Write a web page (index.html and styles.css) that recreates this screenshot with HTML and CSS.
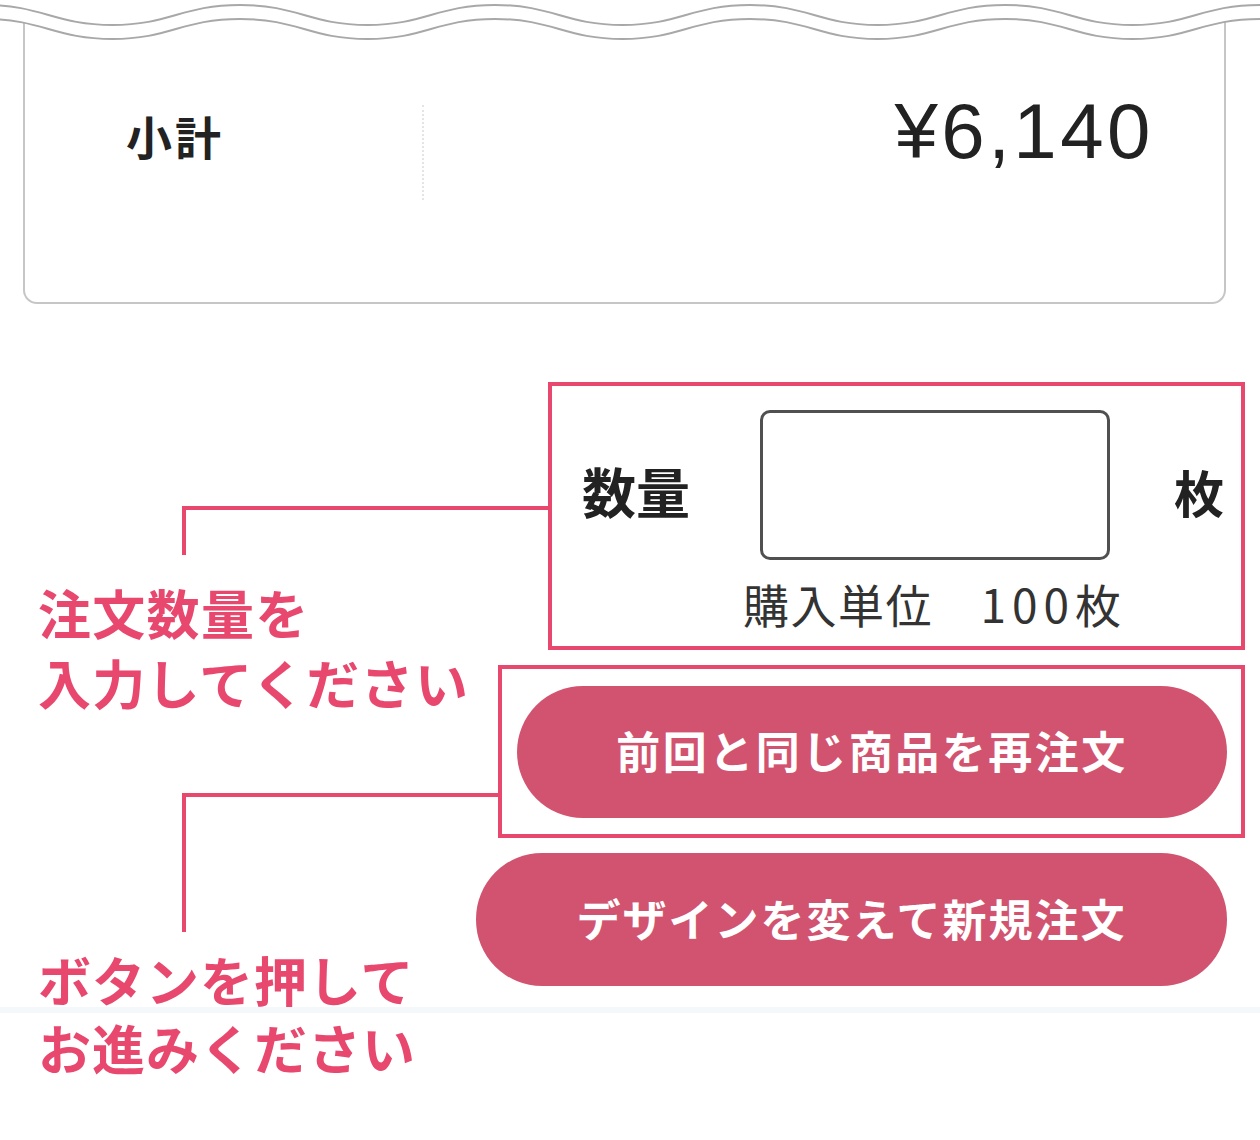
FILE: index.html
```html
<!DOCTYPE html>
<html lang="ja">

<head>
    <meta charset="utf-8">
    <title>ご注文</title>
    <link rel="stylesheet" href="styles.css">
</head>

<body>
    <!-- torn paper edge over the top of the summary card -->
    <svg class="torn-edge" width="1260" height="50" viewBox="0 0 1260 50">
        <path class="torn-fill" d="M-15,19 C42,19 55,39 112.5,39 S182,19 240,19 S310,39 367.5,39 S437,19 495,19 S565,39 622.5,39 S692,19 750,19 S820,39 877.5,39 S947,19 1005,19 S1075,39 1132.5,39 S1202,19 1260,19 S1330,39 1387.5,39 L1387.5,-10 L-15,-10 Z" />
        <path class="torn-line" d="M-15,5 C42,5 55,25 112.5,25 S182,5 240,5 S310,25 367.5,25 S437,5 495,5 S565,25 622.5,25 S692,5 750,5 S820,25 877.5,25 S947,5 1005,5 S1075,25 1132.5,25 S1202,5 1260,5 S1330,25 1387.5,25" />
        <path class="torn-line" d="M-15,19 C42,19 55,39 112.5,39 S182,19 240,19 S310,39 367.5,39 S437,19 495,19 S565,39 622.5,39 S692,19 750,19 S820,39 877.5,39 S947,19 1005,19 S1075,39 1132.5,39 S1202,19 1260,19 S1330,39 1387.5,39" />
    </svg>

    <div class="summary">
        <div class="summary-row">
            <div class="summary-label">小計</div>
            <div class="summary-price"><span>¥6,140</span></div>
        </div>
    </div>

    <div class="order">
        <div class="notes">
            <div class="note note-qty">
                <div class="leader leader-qty"></div>
                <p class="note-text">注文数量を<br>入力してください</p>
            </div>
            <div class="note note-btn">
                <div class="leader leader-btn"></div>
                <p class="note-text">ボタンを押して<br>お進みください</p>
            </div>
        </div>

        <div class="steps">
            <div class="qty-box">
                <label class="qty-label" for="qty">数量</label>
                <input class="qty-input" id="qty" type="text">
                <span class="qty-unit">枚</span>
                <p class="qty-note">購入単位　<span class="qty-num">100</span>枚</p>
            </div>
            <div class="btn-box">
                <button class="order-btn">前回と同じ商品を再注文</button>
            </div>
            <button class="order-btn order-btn-new">デザインを変えて新規注文</button>
        </div>
    </div>
</body>

</html>
```

FILE: styles.css
```css
*,
html {
    margin: 0;
    padding: 0;
    box-sizing: border-box;
}

body {
    width: 1260px;
    position: relative;
    font-family: "Noto Sans CJK JP", "Noto Sans", sans-serif;
    color: #222;
    background: #fff linear-gradient(#f4f8fb, #f4f8fb) no-repeat 0 1007px / 100% 6px;
}

/* torn edge */
.torn-edge {
    position: absolute;
    top: 0;
    left: 0;
    z-index: 1;
}

.torn-fill {
    fill: #fff;
}

.torn-line {
    fill: none;
    stroke: #a8a8a8;
    stroke-width: 2;
}

/* subtotal card */
.summary {
    height: 304px;
    margin: 0 34px 0 23px;
    padding-top: 105px;
    border: 2px solid #c6c6c6;
    border-top: 0;
    border-radius: 0 0 14px 14px;
}

.summary-row {
    display: flex;
    height: 95px;
}

.summary-label {
    width: 397px;
    padding: 7px 0 0 101px;
    font-size: 46px;
    line-height: 46px;
    font-weight: 700;
    letter-spacing: 3px;
}

.summary-price {
    flex: 1;
    padding-right: 70px;
    border-left: 2px dotted #e4e4e4;
    text-align: right;
}

.summary-price span {
    display: block;
    margin-top: -13px;
    font-family: "Liberation Sans", Arial, sans-serif;
    font-size: 78px;
    line-height: 78px;
    letter-spacing: 3.5px;
}

/* order area */
.order {
    display: flex;
    padding-top: 78px;
}

.notes {
    width: 498px;
    flex: none;
}

.note-qty {
    padding-top: 124px;
}

.note-btn {
    margin-top: 76px;
}

.leader {
    margin-left: 182px;
    border-top: 4px solid #e8486e;
    border-left: 4px solid #e8486e;
}

.leader-qty {
    width: 366px;
    height: 49px;
}

.leader-btn {
    width: 316px;
    height: 139px;
}

.note-text {
    margin: 22px 0 0 38px;
    color: #e8486e;
    font-size: 53px;
    line-height: 70px;
    font-weight: 700;
    letter-spacing: 1.3px;
    white-space: nowrap;
}

.note-btn .note-text {
    margin-top: 13px;
    line-height: 68px;
    letter-spacing: 1px;
}

.steps {
    flex: 1;
    margin-right: 15px;
    display: flex;
    flex-direction: column;
    gap: 15px;
}

.qty-box {
    margin-left: 50px;
    padding: 24px 0 20px 30px;
    border: 4px solid #e8486e;
    display: grid;
    grid-template-columns: 178px 350px 1fr;
}

.qty-label {
    align-self: center;
    margin-top: 12px;
    font-size: 54px;
    line-height: 54px;
    font-weight: 700;
}

.qty-input {
    width: 350px;
    height: 150px;
    border: 3px solid #505050;
    border-radius: 10px;
    background: #fff;
}

.qty-unit {
    align-self: center;
    margin-top: 12px;
    padding-left: 64px;
    font-size: 50px;
    line-height: 50px;
    font-weight: 700;
}

.qty-note {
    grid-column: 2 / 4;
    margin: 20px 0 0 -17px;
    color: #333;
    font-size: 46px;
    line-height: 46px;
    letter-spacing: 1.5px;
    white-space: nowrap;
}

.qty-num {
    letter-spacing: 6px;
}

.btn-box {
    padding: 17px 14px 16px 15px;
    border: 4px solid #e8486e;
}

.order-btn {
    display: block;
    width: 100%;
    height: 132px;
    padding-bottom: 4px;
    border: 0;
    border-radius: 66px;
    background: #d2536f;
    color: #fff;
    font-family: "Noto Sans CJK JP", "Noto Sans", sans-serif;
    font-size: 44px;
    font-weight: 700;
    letter-spacing: 2.5px;
}

.order-btn-new {
    width: 751px;
    height: 133px;
    margin-left: -22px;
    letter-spacing: 2px;
}
```
